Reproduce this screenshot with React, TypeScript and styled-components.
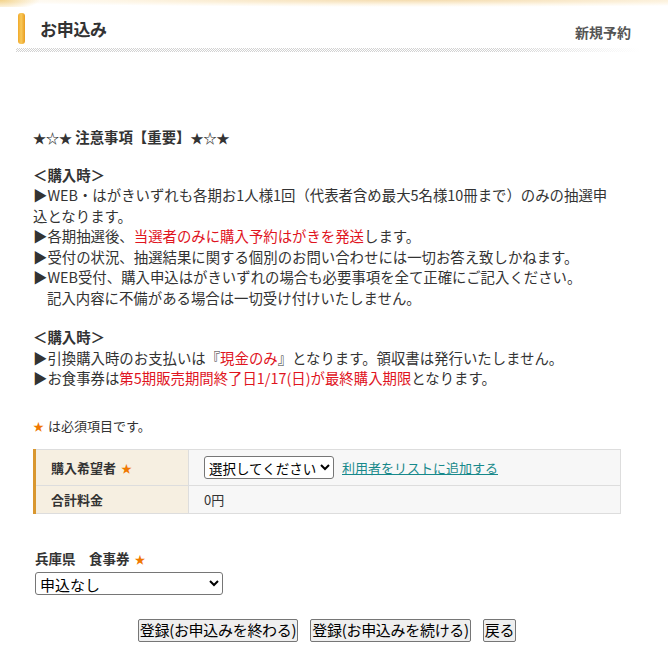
import styled, { createGlobalStyle } from 'styled-components';

const GlobalStyle = createGlobalStyle`
  body {
    margin: 0;
    background: #fff;
    color: #333;
    font-family: "Noto Sans CJK JP", "Noto Sans", sans-serif;
  }
`;

const TopGlow = styled.div`
  height: 7px;
  background:
    radial-gradient(ellipse 40px 10px at 0 0, rgba(240, 200, 110, 0.8), transparent 100%),
    radial-gradient(ellipse 70% 100% at 62% 0, rgba(240, 205, 140, 0.7), rgba(250, 228, 185, 0.35) 65%, transparent 100%);
`;

const Page = styled.div`
  padding: 6px 28px 30px 16px;
`;

const Heading = styled.header`
  display: flex;
  align-items: center;
  justify-content: space-between;
  height: 31px;
  padding: 0 9px 0 2px;
`;

const TitleWrap = styled.div`
  display: flex;
  align-items: center;
  gap: 15px;
  height: 100%;
`;

const Bar = styled.span`
  width: 7px;
  height: 31px;
  border-radius: 3px;
  background: linear-gradient(90deg, #f1a92a, #f8c95a 45%, #e99c1f);
`;

const Title = styled.h1`
  margin: 0;
  font-size: 17px;
  font-weight: 700;
  color: #333;
  letter-spacing: -0.3px;
`;

const SubTitle = styled.span`
  margin-top: 7px;
  font-size: 14px;
  font-weight: 700;
  color: #555;
`;

const Dotted = styled.div`
  margin-top: 4px;
  height: 4px;
  background: repeating-conic-gradient(#d2d2d2 0 25%, transparent 0 50%) 0 0 / 2px 2px;
  -webkit-mask-image: linear-gradient(90deg, #000 78%, transparent 100%);
  mask-image: linear-gradient(90deg, #000 78%, transparent 100%);
`;

const Content = styled.main`
  padding-left: 17px;
`;

const Notice = styled.section`
  margin-top: 75px;
  font-size: 14.4px;
  line-height: 20.5px;
`;

const NoticeTitle = styled.p`
  margin: 0 0 16px;
  font-weight: 700;
`;

const Stars = styled.span`
  font-size: 13px;
`;

const Group = styled.div`
  & + & {
    margin-top: 19px;
  }
`;

const GroupHead = styled.p`
  margin: 0;
  font-weight: 700;
`;

const Item = styled.p`
  margin: 0;
  white-space: nowrap;
`;

const Indent = styled.span`
  padding-left: 14px;
`;

const Red = styled.span`
  color: #e0141e;
`;

const Required = styled.p`
  margin: 27px 0 0;
  font-size: 13px;
  line-height: 20px;
`;

const Star = styled.span<{ $gap?: number }>`
  color: #f07800;
  font-size: 11px;
  margin: 0 4px 0 ${(p) => p.$gap ?? 0}px;
`;

const Table = styled.table`
  margin-top: 13px;
  width: 588px;
  border-collapse: collapse;
  font-size: 13px;
`;

const Label = styled.th<{ $h: number }>`
  width: 137px;
  height: ${(p) => p.$h}px;
  padding: 0 0 0 15px;
  text-align: left;
  font-weight: 700;
  background: #f6efe1;
  border: 1px solid #ddd;
  border-left: 3px solid #d9972f;
`;

const Cell = styled.td`
  padding: 0 8px 0 15px;
  background: #f7f7f7;
  border: 1px solid #ddd;
`;

const CellRow = styled.div`
  display: flex;
  align-items: center;
  gap: 8px;
`;

const Select = styled.select<{ $w?: number; $size: number }>`
  width: ${(p) => (p.$w ? `${p.$w}px` : 'auto')};
  height: 23px;
  font-family: inherit;
  font-size: ${(p) => p.$size}px;
  color: #000;
  background: #fff;
  border: 1px solid #767676;
  border-radius: 3px;
  padding: 0;
`;

const AddLink = styled.a`
  color: #17898b;
  text-decoration: underline;
  font-size: 13px;
`;

const FoodBlock = styled.div`
  margin-top: 34px;
  padding-left: 2px;
`;

const FoodLabel = styled.p`
  margin: 0 0 3px;
  font-size: 13.5px;
  font-weight: 700;
  line-height: 20px;
`;

const Buttons = styled.div`
  width: 588px;
  margin-top: 23px;
  display: flex;
  justify-content: center;
  gap: 12px;
`;

const Button = styled.button`
  height: 23px;
  padding: 0 1px;
  font-family: inherit;
  font-size: 15px;
  letter-spacing: -0.3px;
  line-height: 20px;
  color: #000;
  background: #efefef;
  border: 1px solid #767676;
  border-radius: 2px;
`;

export default function App() {
  return (
    <>
      <GlobalStyle />
      <TopGlow />
      <Page>
        <Heading>
          <TitleWrap>
            <Bar />
            <Title>お申込み</Title>
          </TitleWrap>
          <SubTitle>新規予約</SubTitle>
        </Heading>
        <Dotted />

        <Content>
          <Notice>
            <NoticeTitle>
              <Stars>★☆★</Stars> 注意事項【重要】<Stars>★☆★</Stars>
            </NoticeTitle>

            <Group>
              <GroupHead>＜購入時＞</GroupHead>
              <Item>
                ▶WEB・はがきいずれも各期お1人様1回（代表者含め最大5名様10冊まで）のみの抽選申
                <br />
                込となります。
              </Item>
              <Item>
                ▶各期抽選後、<Red>当選者のみに購入予約はがきを発送</Red>します。
              </Item>
              <Item>▶受付の状況、抽選結果に関する個別のお問い合わせには一切お答え致しかねます。</Item>
              <Item>
                ▶WEB受付、購入申込はがきいずれの場合も必要事項を全て正確にご記入ください。
                <br />
                <Indent>記入内容に不備がある場合は一切受け付けいたしません。</Indent>
              </Item>
            </Group>

            <Group>
              <GroupHead>＜購入時＞</GroupHead>
              <Item>
                ▶引換購入時のお支払いは『<Red>現金のみ</Red>』となります。領収書は発行いたしません。
              </Item>
              <Item>
                ▶お食事券は<Red>第5期販売期間終了日1/17(日)が最終購入期限</Red>となります。
              </Item>
            </Group>
          </Notice>

          <Required>
            <Star>★</Star>は必須項目です。
          </Required>

          <Table>
            <tbody>
              <tr>
                <Label $h={35}>
                  購入希望者<Star $gap={5}>★</Star>
                </Label>
                <Cell>
                  <CellRow>
                    <Select $size={13.5} defaultValue="">
                      <option value="">選択してください</option>
                    </Select>
                    <AddLink href="#">利用者をリストに追加する</AddLink>
                  </CellRow>
                </Cell>
              </tr>
              <tr>
                <Label $h={27}>合計料金</Label>
                <Cell>0円</Cell>
              </tr>
            </tbody>
          </Table>

          <FoodBlock>
            <FoodLabel>
              兵庫県　食事券<Star $gap={5}>★</Star>
            </FoodLabel>
            <Select $w={188} $size={15} defaultValue="none">
              <option value="none">申込なし</option>
            </Select>
          </FoodBlock>

          <Buttons>
            <Button type="button">登録(お申込みを終わる)</Button>
            <Button type="button">登録(お申込みを続ける)</Button>
            <Button type="button">戻る</Button>
          </Buttons>
        </Content>
      </Page>
    </>
  );
}
